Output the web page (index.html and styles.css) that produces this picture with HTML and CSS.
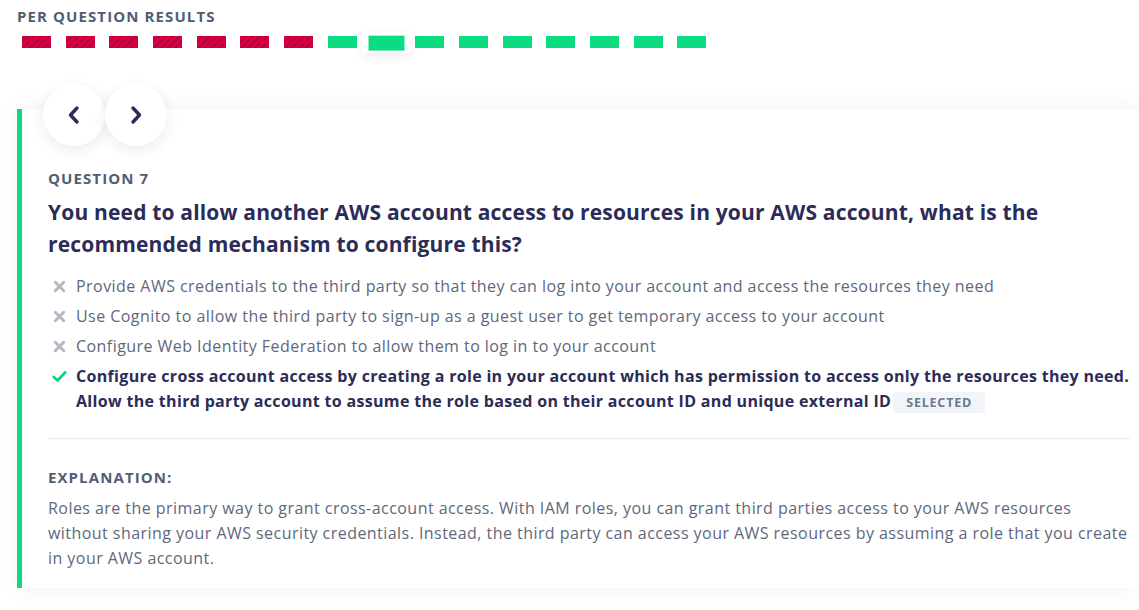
FILE: index.html
```html
<!DOCTYPE html>
<html lang="en">
<head>
<meta charset="utf-8">
<title>Per question results</title>
<link rel="stylesheet" href="styles.css">
</head>
<body>
<section class="results">
  <h2 class="results-title">PER QUESTION RESULTS</h2>
  <div class="bars">
    <span class="bar wrong"></span>
    <span class="bar wrong"></span>
    <span class="bar wrong"></span>
    <span class="bar wrong"></span>
    <span class="bar wrong"></span>
    <span class="bar wrong"></span>
    <span class="bar wrong"></span>
    <span class="bar right"></span>
    <span class="bar-current"><span class="bar right"></span></span>
    <span class="bar right"></span>
    <span class="bar right"></span>
    <span class="bar right"></span>
    <span class="bar right"></span>
    <span class="bar right"></span>
    <span class="bar right"></span>
    <span class="bar right"></span>
  </div>
</section>

<article class="card">
  <div class="nav">
    <button class="nav-btn" aria-label="Previous">
      <svg width="16" height="20" viewBox="0 0 16 20"><path d="M11 3 L4.5 10 L11 17" fill="none" stroke="#2b2c57" stroke-width="3.4" stroke-linecap="round" stroke-linejoin="round"/></svg>
    </button>
    <button class="nav-btn" aria-label="Next">
      <svg width="16" height="20" viewBox="0 0 16 20"><path d="M5 3 L11.5 10 L5 17" fill="none" stroke="#2b2c57" stroke-width="3.4" stroke-linecap="round" stroke-linejoin="round"/></svg>
    </button>
  </div>

  <div class="label">QUESTION 7</div>
  <h1 class="question">You need to allow another AWS account access to resources in your AWS account, what is the recommended mechanism to configure this?</h1>

  <ul class="options">
    <li class="option">
      <svg class="icon" width="13" height="13" viewBox="0 0 13 13"><path d="M2.3 2.3 L10.7 10.7 M10.7 2.3 L2.3 10.7" stroke="#b3b8c2" stroke-width="3" stroke-linecap="round"/></svg>
      <span>Provide AWS credentials to the third party so that they can log into your account and access the resources they need</span>
    </li>
    <li class="option">
      <svg class="icon" width="13" height="13" viewBox="0 0 13 13"><path d="M2.3 2.3 L10.7 10.7 M10.7 2.3 L2.3 10.7" stroke="#b3b8c2" stroke-width="3" stroke-linecap="round"/></svg>
      <span>Use Cognito to allow the third party to sign-up as a guest user to get temporary access to your account</span>
    </li>
    <li class="option">
      <svg class="icon" width="13" height="13" viewBox="0 0 13 13"><path d="M2.3 2.3 L10.7 10.7 M10.7 2.3 L2.3 10.7" stroke="#b3b8c2" stroke-width="3" stroke-linecap="round"/></svg>
      <span>Configure Web Identity Federation to allow them to log in to your account</span>
    </li>
    <li class="option correct">
      <svg class="icon" width="15" height="13" viewBox="0 0 15 13"><path d="M1.8 7 L5.5 10.5 L13.2 2.5" fill="none" stroke="#12d27a" stroke-width="2.8" stroke-linecap="round" stroke-linejoin="round"/></svg>
      <span>Configure cross account access by creating a role in your account which has permission to access only the resources they need. Allow the third party account to assume the role based on their account ID and unique external ID<span class="badge">SELECTED</span></span>
    </li>
  </ul>

  <hr class="divider">

  <div class="label expl-label">EXPLANATION:</div>
  <p class="explanation">Roles are the primary way to grant cross-account access. With IAM roles, you can grant third parties access to your AWS resources without sharing your AWS security credentials. Instead, the third party can access your AWS resources by assuming a role that you create in your AWS account.</p>
</article>
</body>
</html>
```

FILE: styles.css
```css
html, body {
  margin: 0;
  padding: 0;
  background: #ffffff;
  overflow: hidden;
}

body {
  font-family: "Open Sans", "Noto Sans", sans-serif;
  color: #5b6579;
  width: 1139px;
  height: 610px;
}

.results {
  padding: 6px 0 0 17px;
}

.results-title {
  margin: 0;
  font-size: 15px;
  line-height: 20px;
  font-weight: 700;
  letter-spacing: 1.1px;
  color: #525d74;
}

.bars {
  display: flex;
  align-items: center;
  gap: 14.7px;
  margin: 10px 0 0 5px;
  height: 12px;
}

.bar {
  display: block;
  width: 29px;
  height: 12px;
  flex: none;
}

.bar.wrong {
  background: repeating-linear-gradient(135deg, #d8003f 0 3px, #b9003b 3px 5px);
}

.bar.right {
  background: #0bdc7f;
}

.bar-current {
  display: block;
  flex: none;
  background: #ffffff;
  padding: 2.5px 5px;
  margin: 0 -5px;
  transform: scale(1.24);
  box-shadow: 0 3px 8px rgba(40, 40, 80, 0.08);
}

.card {
  margin: 61px 0 0 17px;
  border-left: 5px solid #0fd97c;
  padding: 0 9px 17px 26px;
  background: #ffffff;
  box-shadow: 0 0 22px rgba(0, 0, 0, 0.06);
}

.nav {
  display: flex;
  margin: 0 0 -25px -5px;
  position: relative;
  top: -25px;
  height: 62px;
}

.nav-btn {
  width: 62px;
  height: 62px;
  border-radius: 50%;
  border: none;
  background: #ffffff;
  box-shadow: 0 4px 14px rgba(30, 30, 70, 0.09);
  display: flex;
  align-items: center;
  justify-content: center;
  padding: 0;
  cursor: pointer;
}

.label {
  margin-top: 22px;
  font-size: 15px;
  line-height: 20px;
  font-weight: 700;
  letter-spacing: 1.1px;
  color: #525d74;
}

.question {
  margin: 8px 0 0;
  font-size: 21px;
  line-height: 32px;
  font-weight: 700;
  letter-spacing: 0.17px;
  color: #2b2c57;
}

.options {
  list-style: none;
  margin: 14px 0 0;
  padding: 0;
}

.option {
  display: flex;
  align-items: flex-start;
  font-size: 16px;
  line-height: 25px;
  letter-spacing: 0.45px;
  color: #5e687c;
  margin-bottom: 5px;
}

.option .icon {
  flex: none;
  margin: 6px 10px 0 5px;
}

.option.correct {
  font-weight: 700;
  letter-spacing: 0.32px;
  color: #2b2c57;
}

.option.correct .icon {
  margin-left: 4px;
  margin-right: 9px;
}

.badge {
  display: inline-block;
  margin-left: 2px;
  padding: 0 13px;
  height: 21px;
  line-height: 21px;
  font-size: 12.5px;
  font-weight: 700;
  letter-spacing: 0.8px;
  color: #6d7a91;
  background: #f1f4f8;
  border-radius: 3px;
  vertical-align: 0;
}

.divider {
  border: none;
  border-top: 1px solid #e9eaed;
  margin: 24px 0 0;
}

.expl-label {
  margin-top: 28px;
}

.explanation {
  margin: 9px 0 0;
  font-size: 16px;
  line-height: 25px;
  letter-spacing: 0.45px;
  color: #5e687c;
}
```
